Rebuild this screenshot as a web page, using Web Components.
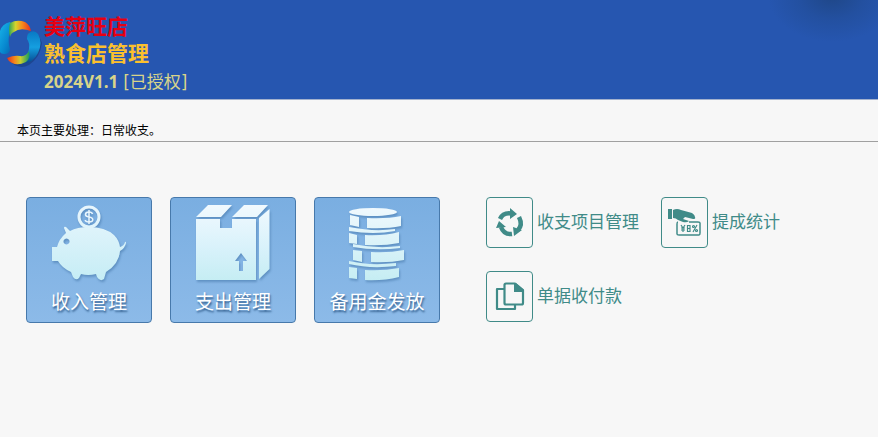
<!DOCTYPE html>
<html lang="zh-CN">
<head>
<meta charset="utf-8">
<title>美萍旺店 熟食店管理</title>
<style>
html{background:#f7f7f7}
body{margin:0;font-family:"Liberation Sans","Noto Sans CJK SC",sans-serif;color:#000}
</style>
</head>
<body>
<shop-app></shop-app>

<template id="t-app">
<style>
:host{display:block}
main{display:flex;flex-wrap:wrap;align-items:flex-start;gap:24px 46px;padding:55px 26px}
.tiles{display:flex;flex-wrap:wrap;gap:18px}
.links{display:grid;grid-template-columns:repeat(2,max-content);gap:23px 22px}
</style>
<shop-header>
<span slot="brand">美萍旺店</span><span slot="product">熟食店管理</span>
<span slot="version">2024V1.1</span><span slot="license">[已授权]</span>
</shop-header>
<page-note>本页主要处理：日常收支。</page-note>
<main>
<div class="tiles">
<big-tile icon="pig">收入管理</big-tile>
<big-tile icon="box">支出管理</big-tile>
<big-tile icon="coins">备用金发放</big-tile>
</div>
<div class="links">
<small-action icon="cycle">收支项目管理</small-action>
<small-action icon="hand">提成统计</small-action>
<small-action icon="copy">单据收付款</small-action>
</div>
</main>
</template>

<template id="t-header">
<style>
:host{display:block;border-bottom:1px solid #a3b1cd;background:radial-gradient(ellipse 64px 46px at calc(100% - 46px) -4px,#1f4788 0,#2350a0 50%,#2656b0 100%) #2656b0}
header{display:flex;align-items:flex-start;padding:13px 0 0;min-height:86px}
svg{display:block;width:44px;height:56px;flex:none}
h1{margin:0;font-size:21px;line-height:27px;font-weight:700}
.brand{display:block;color:#e60012}
.product{display:block;color:#fbc02e}
p{display:flex;gap:5px;margin:0;padding-top:1px;font:400 17px/28px "Open Sans",sans-serif;color:#d8d48a}
b{font-weight:700}
.license{font-family:"DejaVu Sans","Noto Sans CJK SC",sans-serif}
</style>
<header>
<svg viewBox="0 13 44 56" aria-hidden="true">
<defs>
<linearGradient id="l" x1="0" y1="0" x2="1" y2="1"><stop offset="0" stop-color="#19b4e8"/><stop offset=".55" stop-color="#0789d0"/><stop offset="1" stop-color="#075aa8"/></linearGradient>
<linearGradient id="r" x1="0" y1="0" x2="0" y2="1"><stop offset="0" stop-color="#0879c4"/><stop offset=".5" stop-color="#159fe0"/><stop offset="1" stop-color="#064a91"/></linearGradient>
<linearGradient id="a"><stop offset="0" stop-color="#2da65a"/><stop offset=".3" stop-color="#d7d52c"/><stop offset=".6" stop-color="#f58a1c"/><stop offset="1" stop-color="#e5301f"/></linearGradient>
<linearGradient id="b"><stop offset="0" stop-color="#e5301f"/><stop offset=".35" stop-color="#f58a1c"/><stop offset=".6" stop-color="#c8ce2f"/><stop offset="1" stop-color="#129a62"/></linearGradient>
</defs>
<path d="M7 58Q17 71 29 65Q40 58 42 43L39 36Q37 50 27 58Z" fill="#173c7d" opacity=".6"/>
<path d="M0 31Q2 24 10 22L14 27Q10 30 9 35Q8 43 10 49Q10 54 4 54Q1 54 0 52Z" fill="url(#l)"/>
<path d="M10 23Q17 19 25 22Q30 25 31 31Q20 27 14 32Q11 33 10 37Q8 30 10 23Z" fill="url(#a)"/>
<path d="M29 33Q34 29 38 34Q43 42 38 53Q33 63 24 63L23 57Q28 55 29 49Q30 43 27 39Q27 34 29 33Z" fill="url(#r)"/>
<path d="M7 58Q14 55 20 56Q26 57 29 51Q31 58 26 62Q18 66 12 63Q8 61 7 58Z" fill="url(#b)"/>
</svg>
<div>
<h1><span class="brand"><slot name="brand"></slot></span><span class="product"><slot name="product"></slot></span></h1>
<p><b><slot name="version"></slot></b><span class="license"><slot name="license"></slot></span></p>
</div>
</header>
</template>

<template id="t-note">
<style>
:host{display:block;border-bottom:1px solid #a0a0a0}
p{margin:0;padding:22px 17px 1px;font-size:12px;line-height:18px}
</style>
<p><slot></slot></p>
</template>

<template id="t-tile">
<style>
:host{display:block}
button{box-sizing:border-box;display:flex;flex-direction:column;align-items:center;width:126px;height:126px;margin:0;padding:0;border:1px solid #4779ab;border-radius:4px;background:linear-gradient(#7aaee1,#8cbae8);color:#fff;font:inherit;font-size:19px;line-height:32px;text-shadow:1px 2px 2px #34608f;cursor:pointer}
button:hover{filter:brightness(1.04)}
svg{display:block;width:124px;height:89px;flex:none;filter:drop-shadow(1px 2px 1px #4779ab99)}
</style>
<button type="button"><svg viewBox="1 1 124 89" aria-hidden="true"></svg><span><slot></slot></span></button>
</template>

<template id="t-small">
<style>
:host{display:block}
button{display:flex;align-items:center;gap:4px;margin:0;padding:0;border:0;background:none;color:#408b88;font:inherit;font-size:17px;line-height:24px;cursor:pointer}
svg{box-sizing:border-box;display:block;width:47px;height:51px;border:1px solid #408b88;border-radius:4px;color:#408b88;flex:none}
</style>
<button type="button"><svg viewBox="1 1 45 49" aria-hidden="true"></svg><span><slot></slot></span></button>
</template>

<script>
const ICONS = {
pig: `<defs><linearGradient id="g" gradientUnits="userSpaceOnUse" x1="0" y1="8" x2="0" y2="84"><stop offset="0" stop-color="#e9f6fd"/><stop offset="1" stop-color="#c5edf5"/></linearGradient></defs>
<circle cx="63" cy="20" r="10" fill="none" stroke="url(#g)" stroke-width="3"/>
<path d="M66.5 17Q66 15 63 15Q59.500 15 59.500 17.500Q59.500 19.500 63 20Q66.800 20.500 66.800 22.800Q66.800 25 63 25Q59.500 25 59.200 23M63 13V27" fill="none" stroke="#e9f6fd" stroke-width="1.500"/>
<path fill="url(#g)" fill-rule="evenodd" d="M38 31Q38 29 40 30L44 34Q51 30 63 30Q79 30 88 38Q93 43 94 50Q98 49 99 45Q100 44 100 46Q99 51 94 54Q93 67 80 75L78 82Q74 85 71 80L70 77Q62 79 55 77L53 81Q50 84 47 80L45 75Q36 71 32 64H26V50H31Q33 42 40 36ZM40.500 41.500a3 3 0 1 0 .01 0Z"/>`,
box: `<defs><linearGradient id="g" gradientUnits="userSpaceOnUse" x1="0" y1="8" x2="0" y2="84"><stop offset="0" stop-color="#f1f9fe"/><stop offset=".55" stop-color="#d9f2fb"/><stop offset="1" stop-color="#c5edf3"/></linearGradient></defs>
<path fill="url(#g)" fill-rule="evenodd" d="M38 8H62L51 20H26ZM74 8H98L87 20H62ZM26 22H50V31H62V22H86V83H26ZM71 56L65 64H69V74H73V64H77ZM89 21L99.500 12V72L89 82Z"/>`,
coins: `<defs><linearGradient id="g" gradientUnits="userSpaceOnUse" x1="0" y1="8" x2="0" y2="84"><stop offset="0" stop-color="#f1f9fe"/><stop offset="1" stop-color="#c5edf3"/></linearGradient></defs>
<g fill="url(#g)"><ellipse cx="59" cy="15" rx="24" ry="4"/>
<path d="M36 18L45 20V30L36 28ZM53 21Q73 22 87 19V29Q73 32 53 31ZM35 30Q60 35 81 32V34Q60 38 35 34ZM35 36L43 38V47L35 46ZM51 38Q70 39 85 35V46Q70 49 51 48ZM39 47Q62 52 86 49V51Q62 54 39 50ZM39 53L48 54V65L39 63ZM57 55Q75 56 90 53V63Q75 66 57 65ZM35 64Q56 69 82 66V69Q56 72 35 67ZM35 70L43 71V82L35 81ZM51 73Q69 74 85 71V80Q69 84 51 83Z"/></g>`,
cycle: `<g fill="none" stroke="currentColor" stroke-width="4.500"><path d="M14 22Q17 15.500 25 16.500"/><path d="M33 20Q37 28 32 33"/><path d="M26 37Q18 38 15 30"/></g>
<path fill="currentColor" d="M24 11L31 17L24 22ZM27 30L36 33L28 39ZM10 31L13 24L20 30Z"/>`,
hand: `<path fill="currentColor" d="M7 12H11V22H7ZM12 13Q16 11 20 13L31 16Q34 18 34 20Q35 22 32 22L24 20L22 22L28 24Q26 26 22 25L17 23Q15 21 12 21Z"/>
<path d="M17 25Q16 25 16 27V37Q16 38 18 38H38Q39 38 39 36V26Q39 25 37 25H28" fill="none" stroke="currentColor" stroke-width="1.500"/>
<g fill="none" stroke="currentColor" stroke-width="1.200"><path d="M20 28L22 31L24 28M22 31V35M20 31H24M20 33H24M27 28.500H29V34.500H26.500V28.500H27M26.500 31.500H29M36 28L32 35"/><circle cx="32.500" cy="29.500" r="1"/><circle cx="35.500" cy="33.500" r="1"/></g>`,
copy: `<g fill="none" stroke="currentColor" stroke-width="2.200" stroke-linejoin="round"><path d="M18 18H11V38H29V34"/><path d="M18.500 14Q18.500 12.500 20 12.500H29L37 19V32Q37 33.500 35.500 33.500H20Q18.500 33.500 18.500 32Z"/></g><path fill="currentColor" d="M28 12H30L38 19V21H28Z"/>`
};
class Base extends HTMLElement {
  constructor() {
    super();
    this.attachShadow({mode: "open"}).append(document.getElementById(this.constructor.tpl).content.cloneNode(true));
  }
}
class IconBase extends Base {
  connectedCallback() {
    this.shadowRoot.querySelector("svg").innerHTML = ICONS[this.getAttribute("icon")];
  }
}
customElements.define("shop-header", class extends Base { static tpl = "t-header"; });
customElements.define("page-note", class extends Base { static tpl = "t-note"; });
customElements.define("big-tile", class extends IconBase { static tpl = "t-tile"; });
customElements.define("small-action", class extends IconBase { static tpl = "t-small"; });
customElements.define("shop-app", class extends Base { static tpl = "t-app"; });
</script>
</body>
</html>
